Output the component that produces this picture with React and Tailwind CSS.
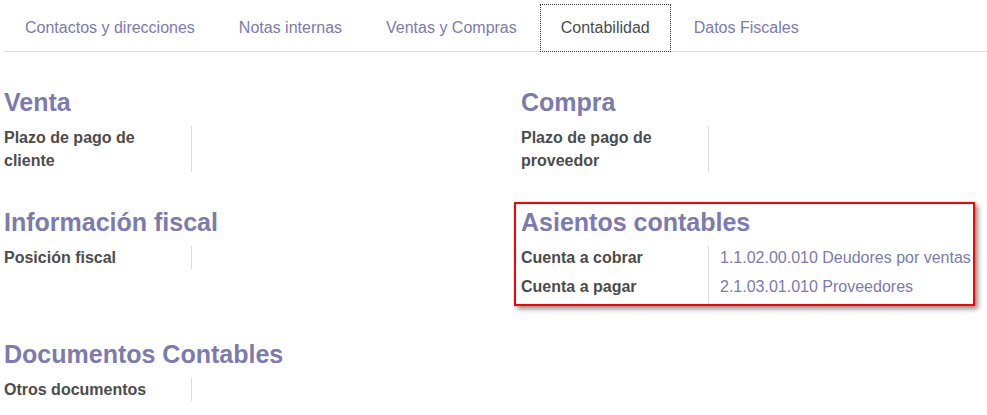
import React from 'react';

const tabs = ['Contactos y direcciones', 'Notas internas', 'Ventas y Compras', 'Contabilidad', 'Datos Fiscales'];

const Field = ({ label, value }) => (
  <div className="flex">
    <div className="w-[187px] shrink-0 pr-[16px] font-bold text-[#4c4c4c] leading-[23px]">{label}</div>
    <div className={`border-l border-[#dcdcdc] pl-[11px] flex-1 leading-[23px] text-[#7c7bad] ${value ? 'pb-[6px]' : ''}`}>
      {value}
    </div>
  </div>
);

const Section = ({ title, children }) => (
  <div className="mt-[36px]">
    <h2 className="text-[25px] font-bold leading-[28px] h-[28px] mb-[10px] text-[#7c7bad]">{title}</h2>
    <div>{children}</div>
  </div>
);

export default function App() {
  return (
    <div className="w-[987px] h-[415px] bg-white overflow-hidden text-[16px]" style={{ fontFamily: '"Liberation Sans", Arial, sans-serif' }}>
      {/* Tabs */}
      <div className="ml-[4px] pt-[4px] flex border-b border-[#dedede]">
        {tabs.map((t) => {
          const active = t === 'Contabilidad';
          return (
            <div
              key={t}
              className={
                active
                  ? 'h-[48px] -mb-px mr-[2px] px-[20px] flex items-center border border-dotted border-[#333] bg-white text-[#4c4c4c]'
                  : 'h-[48px] -mb-px mr-[2px] px-[20px] flex items-center border border-transparent text-[#7c7bad]'
              }
            >
              {t}
            </div>
          );
        })}
      </div>

      {/* Body */}
      <div className="grid grid-cols-[517px_1fr]">
        <div className="pl-[4px]">
          <Section title="Venta">
            <Field label="Plazo de pago de cliente" />
          </Section>
        </div>
        <div className="pl-[4px]">
          <Section title="Compra">
            <Field label="Plazo de pago de proveedor" />
          </Section>
        </div>

        <div className="pl-[4px]">
          <Section title="Información fiscal">
            <Field label="Posición fiscal" />
          </Section>
        </div>
        <div className="pl-[4px] relative">
          <Section title="Asientos contables">
            <Field label="Cuenta a cobrar" value="1.1.02.00.010 Deudores por ventas" />
            <Field label="Cuenta a pagar" value="2.1.03.01.010 Proveedores" />
          </Section>
          {/* annotation box */}
          <div className="absolute left-[-3px] top-[30px] w-[461px] h-[104px] border-2 border-[#ff0000] shadow-[3px_3px_5px_rgba(0,0,0,0.45)] pointer-events-none" />
        </div>

        <div className="pl-[4px]">
          <Section title="Documentos Contables">
            <Field label="Otros documentos" />
          </Section>
        </div>
      </div>
    </div>
  );
}
